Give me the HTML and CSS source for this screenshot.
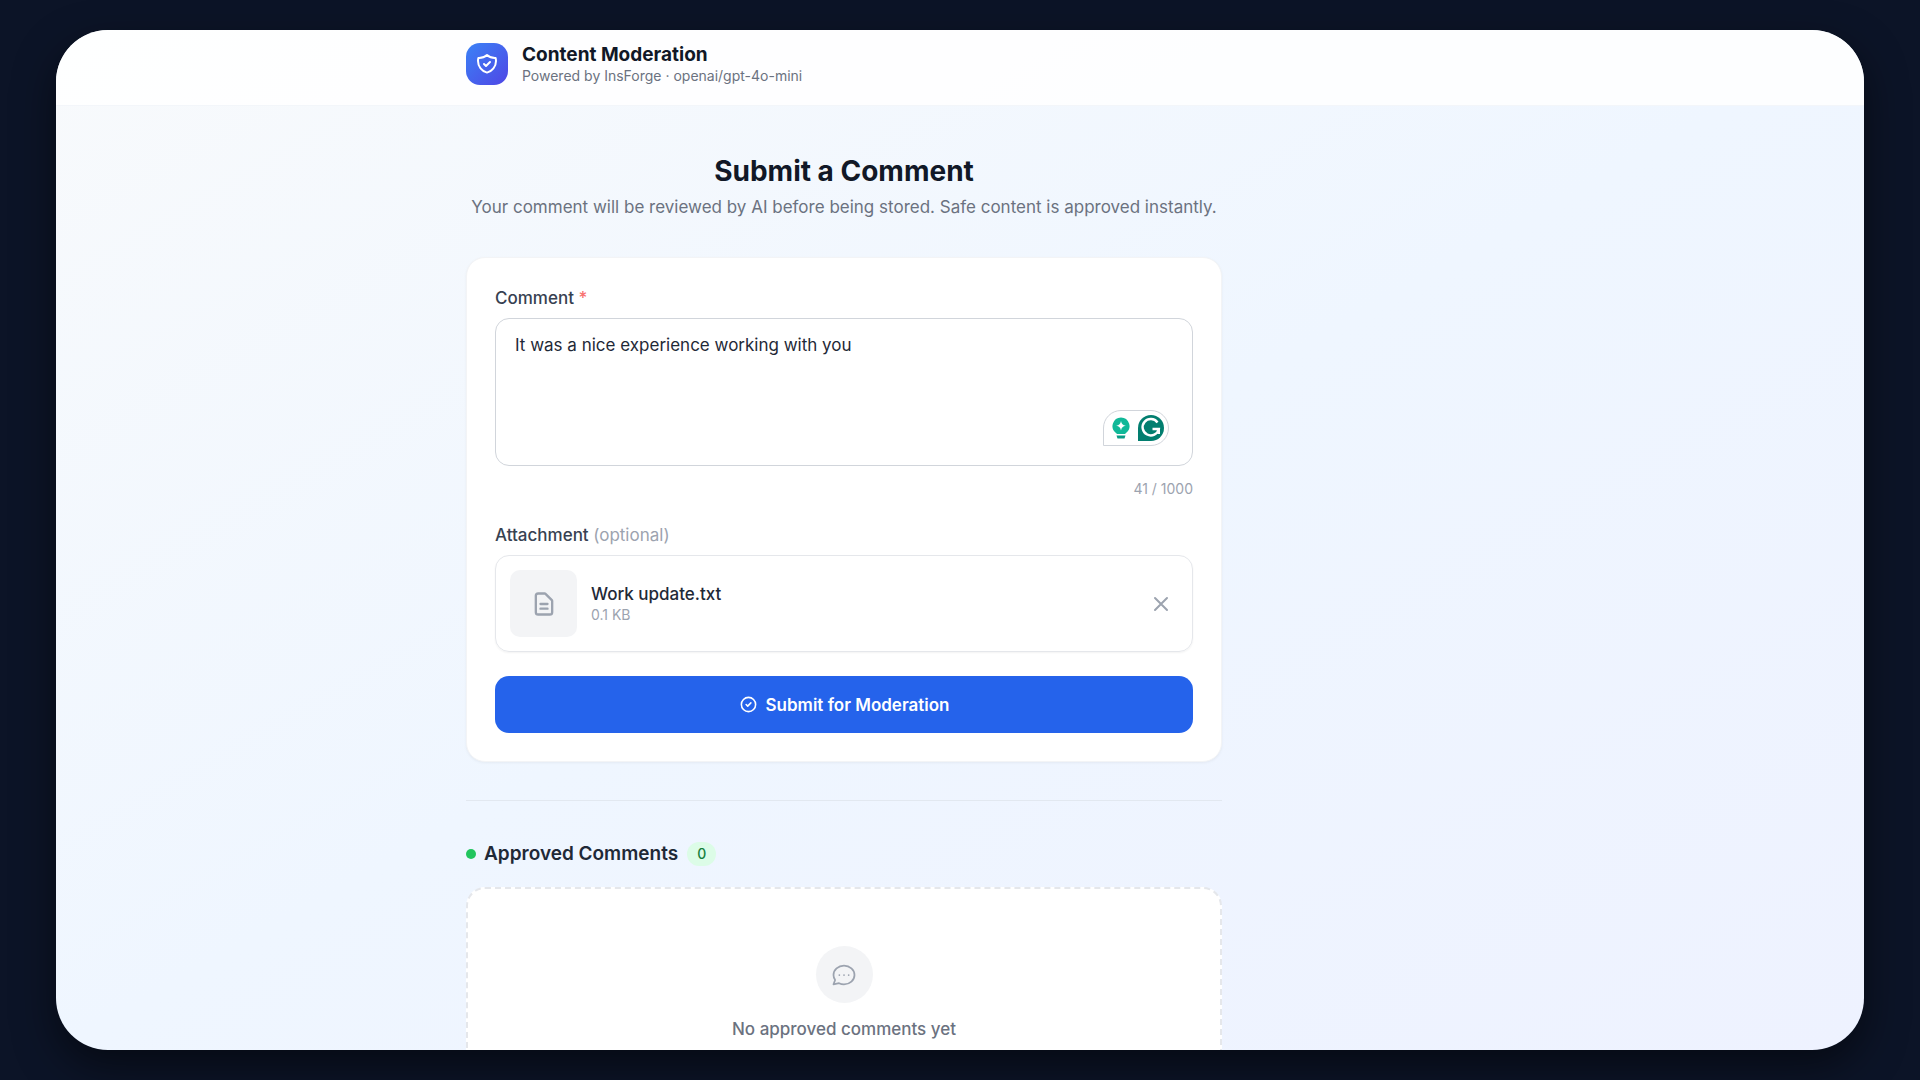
FILE: index.html
```html
<!DOCTYPE html>
<html lang="en">
<head>
<meta charset="utf-8">
<meta name="viewport" content="width=device-width, initial-scale=1">
<title>Content Moderation</title>
<link rel="stylesheet" href="styles.css">
</head>
<body>
<div class="window">
  <header class="topbar">
    <div class="column brand">
      <span class="brand-mark">
        <svg viewBox="0 0 24 24" width="24" height="24" fill="none" stroke="currentColor" stroke-width="2" stroke-linecap="round" stroke-linejoin="round" aria-hidden="true"><path d="M9 12l2 2 4-4m5.618-4.016A11.955 11.955 0 0112 2.944a11.955 11.955 0 01-8.618 3.04A12.02 12.02 0 003 9c0 5.591 3.824 10.29 9 11.622 5.176-1.332 9-6.03 9-11.622 0-1.042-.133-2.052-.382-3.016z"/></svg>
      </span>
      <div>
        <h1 class="brand-name">Content Moderation</h1>
        <p class="brand-note">Powered by InsForge · openai/gpt-4o-mini</p>
      </div>
    </div>
  </header>

  <main class="column content">
    <div class="intro">
      <h2 class="intro-title">Submit a Comment</h2>
      <p class="intro-text">Your comment will be reviewed by AI before being stored. Safe content is approved instantly.</p>
    </div>

    <form class="card">
      <label class="label" for="comment">Comment <span class="required">*</span></label>
      <div class="comment-box">
        <textarea class="comment" id="comment" maxlength="1000" spellcheck="false">It was a nice experience working with you</textarea>
        <div class="assistant">
          <svg viewBox="0 0 18 24" width="18" height="24" aria-hidden="true"><path fill="#10b898" d="M9 1.500a8.600 8.600 0 0 0-5 15.500l1 1h8l1-1A8.600 8.600 0 0 0 9 1.500z"/><path fill="#0a9c85" d="M4.500 19.500h9l-1 3h-7z"/><path fill="#fff" d="M9 5c.6 3 1.800 4.200 4.800 4.800-3 .6-4.200 1.800-4.800 4.800-.6-3-1.800-4.200-4.800-4.800C7.200 9.200 8.400 8 9 5z"/></svg>
          <svg viewBox="0 0 26 26" width="26" height="26" aria-hidden="true"><path fill="#027e6f" d="M13 0a13 13 0 1 1 0 26H0V13A13 13 0 0 1 13 0z"/><path fill="none" stroke="#fff" stroke-width="2.400" d="M19.500 7.500A8.200 8.200 0 1 0 20.800 14H14.500M20.800 13v6"/></svg>
        </div>
      </div>
      <p class="counter">41 / 1000</p>

      <p class="label">Attachment <span class="optional">(optional)</span></p>
      <div class="file">
        <span class="file-thumb">
          <svg viewBox="0 0 24 24" width="28" height="28" fill="none" stroke="currentColor" stroke-width="2" stroke-linecap="round" stroke-linejoin="round" aria-hidden="true"><path d="M9 12h6m-6 4h6m2 5H7a2 2 0 01-2-2V5a2 2 0 012-2h5.586a1 1 0 01.707.293l5.414 5.414a1 1 0 01.293.707V19a2 2 0 01-2 2z"/></svg>
        </span>
        <div class="file-info">
          <p class="file-name">Work update.txt</p>
          <p class="file-size">0.1 KB</p>
        </div>
        <button class="remove" type="button" aria-label="Remove file">
          <svg viewBox="0 0 24 24" width="24" height="24" fill="none" stroke="currentColor" stroke-width="2" stroke-linecap="round" aria-hidden="true"><path d="M6 18L18 6M6 6l12 12"/></svg>
        </button>
      </div>

      <button class="submit" type="submit">
        <svg viewBox="0 0 24 24" width="19" height="19" fill="none" stroke="currentColor" stroke-width="2" stroke-linecap="round" stroke-linejoin="round" aria-hidden="true"><path d="M9 12l2 2 4-4m6 2a9 9 0 11-18 0 9 9 0 0118 0z"/></svg>
        Submit for Moderation
      </button>
    </form>

    <section class="approved">
      <div class="approved-head">
        <span class="dot"></span>
        <h2 class="approved-title">Approved Comments</h2>
        <span class="badge">0</span>
      </div>
      <div class="empty">
        <span class="empty-icon">
          <svg viewBox="0 0 24 24" width="28" height="28" fill="none" stroke="currentColor" stroke-width="1.500" stroke-linecap="round" stroke-linejoin="round" aria-hidden="true"><path d="M8 12h.01M12 12h.01M16 12h.01"/><path d="M21 12c0 4.418-4.030 8-9 8a9.863 9.863 0 01-4.255-.949L3 20l1.395-3.720C3.512 15.042 3 13.574 3 12c0-4.418 4.030-8 9-8s9 3.582 9 8z"/></svg>
        </span>
        <p class="empty-text">No approved comments yet</p>
      </div>
    </section>
  </main>
</div>
</body>
</html>
```
FILE: styles.css
```css
* {
  box-sizing: border-box;
  margin: 0;
}

body {
  height: 100vh;
  padding: 30px 56px;
  overflow: hidden;
  background: #0c1427;
  font-family: Inter, "Liberation Sans", sans-serif;
  font-size: 17px;
  line-height: 24px;
  color: #1f2937;
}

svg {
  display: block;
  flex: none;
}

.window {
  height: 100%;
  overflow: hidden;
  border-radius: 52px;
  background: linear-gradient(to bottom right, #f8fafc 0%, #eff6ff 50%, #eef2ff 100%);
  box-shadow: 0 16px 40px rgba(0, 0, 0, 0.5);
}

.column {
  width: 756px;
  max-width: 100%;
  margin-left: clamp(0px, calc(50% - 494px), 410px);
}

.topbar {
  padding: 13px 0 20px;
  border-bottom: 1px solid #f3f6fa;
  background: rgba(255, 255, 255, 0.85);
}

.brand {
  display: flex;
  align-items: center;
  gap: 14px;
}

.brand-mark {
  display: grid;
  place-items: center;
  width: 42px;
  height: 42px;
  border-radius: 14px;
  background: linear-gradient(135deg, #3b82f6, #4f46e5);
  color: #fff;
}

.brand-name {
  font-size: 19px;
  line-height: 22px;
  font-weight: 700;
  color: #111827;
}

.brand-note {
  font-size: 14px;
  line-height: 19px;
  color: #6b7280;
}

.content {
  padding-top: 46px;
}

.intro {
  margin-bottom: 38px;
  text-align: center;
}

.intro-title {
  font-size: 28px;
  line-height: 38px;
  font-weight: 700;
  color: #111827;
}

.intro-text {
  margin-top: 5px;
  color: #6b7280;
}

.card {
  display: flex;
  flex-direction: column;
  padding: 28px;
  border: 1px solid #f3f4f6;
  border-radius: 19px;
  background: #fff;
  box-shadow: 0 1px 3px rgba(0, 0, 0, 0.05);
}

.label {
  margin-bottom: 8px;
  font-weight: 500;
  color: #374151;
}

.required {
  color: #f87171;
}

.optional {
  font-weight: 400;
  color: #9ca3af;
}

.comment-box {
  position: relative;
}

.comment {
  display: block;
  width: 100%;
  height: 148px;
  padding: 14px 19px;
  border: 1px solid #d1d5db;
  border-radius: 14px;
  outline: none;
  resize: none;
  background: #fff;
  font: inherit;
  color: #1f2937;
}

.assistant {
  position: absolute;
  right: 24px;
  bottom: 20px;
  display: flex;
  align-items: center;
  gap: 8px;
  padding: 4px 4px 4px 8px;
  border: 1px solid #d1d5db;
  border-radius: 18px 18px 18px 0;
  background: #fff;
}

.counter {
  margin: 13px 0 24px;
  font-size: 14px;
  line-height: 20px;
  text-align: right;
  color: #9ca3af;
}

.file {
  display: flex;
  align-items: center;
  gap: 14px;
  margin-bottom: 24px;
  padding: 14px;
  border: 1px solid #e5e7eb;
  border-radius: 14px;
  box-shadow: 0 1px 2px rgba(0, 0, 0, 0.05);
}

.file-thumb {
  display: grid;
  place-items: center;
  width: 67px;
  height: 67px;
  border-radius: 10px;
  background: #f3f4f6;
  color: #9ca3af;
}

.file-info {
  flex: 1;
}

.file-name {
  line-height: 22px;
  font-weight: 500;
}

.file-size {
  font-size: 14px;
  line-height: 20px;
  color: #9ca3af;
}

.remove {
  padding: 5px;
  border: 0;
  background: none;
  color: #9ca3af;
}

.submit {
  display: flex;
  align-items: center;
  justify-content: center;
  gap: 8px;
  min-height: 57px;
  padding: 16px;
  border: 0;
  border-radius: 14px;
  background: #2563eb;
  font: inherit;
  font-weight: 600;
  color: #fff;
}

.approved {
  margin-top: 38px;
  padding-top: 39px;
  border-top: 1px solid #e2e8f0;
}

.approved-head {
  display: flex;
  align-items: center;
  margin-bottom: 19px;
}

.dot {
  width: 10px;
  height: 10px;
  margin-right: 8px;
  border-radius: 50%;
  background: #22c55e;
}

.approved-title {
  margin-right: 9px;
  font-size: 19px;
  line-height: 28px;
  font-weight: 600;
}

.badge {
  padding: 2px 10px;
  border-radius: 12px;
  background: #dcfce7;
  font-size: 14px;
  line-height: 20px;
  font-weight: 500;
  color: #15803d;
}

.empty {
  display: flex;
  flex-direction: column;
  align-items: center;
  gap: 14px;
  padding: 57px 19px;
  border: 2px dashed #e5e7eb;
  border-radius: 19px;
  background: #fff;
}

.empty-icon {
  display: grid;
  place-items: center;
  width: 57px;
  height: 57px;
  border-radius: 50%;
  background: #f3f4f6;
  color: #9ca3af;
}

.empty-text {
  font-weight: 500;
  color: #6b7280;
}
```
